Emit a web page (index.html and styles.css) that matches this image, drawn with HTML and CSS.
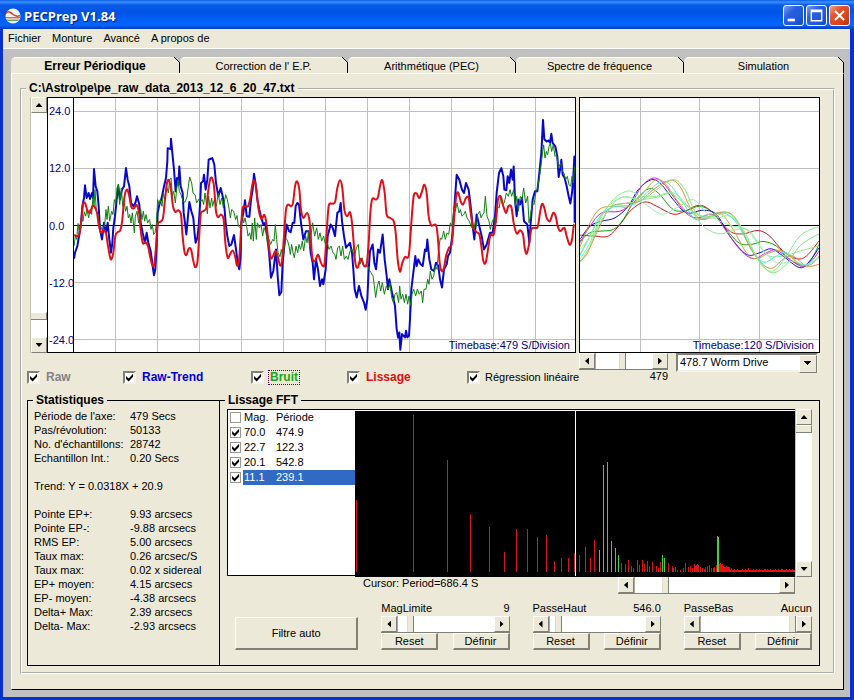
FILE: index.html
```html
<!DOCTYPE html>
<html lang="fr">
<head>
<meta charset="utf-8">
<title>PECPrep V1.84</title>
<link rel="stylesheet" href="styles.css">
</head>
<body>
<div class="window">
  <header class="titlebar">
    <svg class="app-icon" viewBox="0 0 16 16" width="16" height="16" aria-hidden="true">
      <circle cx="8" cy="8" r="7.5" fill="#f6f6ee"/>
      <path d="M1 5.500C4 2 6 5 8 6.500S12 9 15 7.500" fill="none" stroke="#c8402c" stroke-width="1.500"/>
      <path d="M1 9.500H15M2.500 12.500H13.500" stroke="#5fa45f" stroke-width="1"/>
      <path d="M1.500 11H14.500" stroke="#d88070" stroke-width="1"/>
    </svg>
    <h1>PECPrep V1.84</h1>
    <button class="win-btn" aria-label="Réduire"><svg viewBox="0 0 21 21"><path d="M4 14h8v3H4z" fill="#fff"/></svg></button>
    <button class="win-btn" aria-label="Agrandir"><svg viewBox="0 0 21 21"><path d="M4 4h13v13H4zM5.500 7v8.500h10V7z" fill="#fff" fill-rule="evenodd"/></svg></button>
    <button class="win-btn close" aria-label="Fermer"><svg viewBox="0 0 21 21"><path d="M5.500 5.500l10 10M15.500 5.500l-10 10" stroke="#fff" stroke-width="2.200"/></svg></button>
  </header>
  <nav class="menu">
    <a href="#">Fichier</a><a href="#">Monture</a><a href="#">Avancé</a><a href="#">A propos de</a>
  </nav>
  <main class="workspace">
    <div class="tabs" role="tablist">
      <button class="tab active" role="tab">Erreur Périodique</button>
      <button class="tab" role="tab">Correction de l' E.P.</button>
      <button class="tab" role="tab">Arithmétique (PEC)</button>
      <button class="tab" role="tab">Spectre de fréquence</button>
      <button class="tab" role="tab">Simulation</button>
    </div>
    <div class="panel">
      <fieldset class="file-group">
        <legend>C:\Astro\pe\pe_raw_data_2013_12_6_20_47.txt</legend>
        <div class="top">
          <div class="scroll vertical zoom-scroll">
            <button class="arrow up" aria-label="Haut"></button>
            <input type="range" value="92" aria-label="Échelle">
            <button class="arrow down" aria-label="Bas"></button>
          </div>
          <div class="chart">
            <div class="axis"><span>24.0</span><span>12.0</span><span>0.0</span><span>-12.0</span><span>-24.0</span></div>
            <div class="plot">
              <svg id="signal" viewBox="162 24 1503 765" preserveAspectRatio="none"></svg>
              <span class="timebase">Timebase:479 S/Division</span>
            </div>
          </div>
          <div class="chart">
            <div class="plot">
              <svg id="cycles" viewBox="30 24 718 765" preserveAspectRatio="none"></svg>
              <span class="timebase">Timebase:120 S/Division</span>
            </div>
          </div>
          <div class="traces">
            <label class="raw"><input type="checkbox" checked><b>Raw</b></label>
            <label class="trend"><input type="checkbox" checked><b>Raw-Trend</b></label>
            <label class="noise"><input type="checkbox" checked><b>Bruit</b></label>
            <label class="smooth"><input type="checkbox" checked><b>Lissage</b></label>
            <label><input type="checkbox" checked><span>Régression linéaire</span></label>
          </div>
          <div class="period">
            <div class="period-scroll">
              <div class="scroll">
                <button class="arrow left" aria-label="Gauche"></button>
                <input type="range" value="47" aria-label="Période">
                <button class="arrow right" aria-label="Droite"></button>
              </div>
              <output>479</output>
            </div>
            <div class="combo">
              <select aria-label="Axe"><option>478.7 Worm Drive</option></select>
            </div>
          </div>
        </div>
        <div class="bottom">
          <fieldset class="box stats">
            <legend>Statistiques</legend>
            <dl>
              <dt>Période de l'axe:</dt><dd>479 Secs</dd>
              <dt>Pas/révolution:</dt><dd>50133</dd>
              <dt>No. d'échantillons:</dt><dd>28742</dd>
              <dt>Echantillon Int.:</dt><dd>0.20 Secs</dd>
            </dl>
            <p>Trend: Y = 0.0318X + 20.9</p>
            <dl>
              <dt>Pointe EP+:</dt><dd>9.93 arcsecs</dd>
              <dt>Pointe EP-:</dt><dd>-9.88 arcsecs</dd>
              <dt>RMS EP:</dt><dd>5.00 arcsecs</dd>
              <dt>Taux max:</dt><dd>0.26 arcsec/S</dd>
              <dt>Taux max:</dt><dd>0.02 x sidereal</dd>
              <dt>EP+ moyen:</dt><dd>4.15 arcsecs</dd>
              <dt>EP- moyen:</dt><dd>-4.38 arcsecs</dd>
              <dt>Delta+ Max:</dt><dd>2.39 arcsecs</dd>
              <dt>Delta- Max:</dt><dd>-2.93 arcsecs</dd>
            </dl>
          </fieldset>
          <fieldset class="box fft">
            <legend>Lissage FFT</legend>
            <div class="fft-grid">
              <div class="list">
                <table>
                  <thead><tr><td><input type="checkbox" aria-label="Tout"></td><th>Mag.</th><th>Période</th></tr></thead>
                  <tbody>
                    <tr><td><input type="checkbox" checked aria-label="474.9"></td><td>70.0</td><td>474.9</td></tr>
                    <tr><td><input type="checkbox" checked aria-label="122.3"></td><td>22.7</td><td>122.3</td></tr>
                    <tr><td><input type="checkbox" checked aria-label="542.8"></td><td>20.1</td><td>542.8</td></tr>
                    <tr class="selected"><td><input type="checkbox" checked aria-label="239.1"></td><td>11.1</td><td>239.1</td></tr>
                  </tbody>
                </table>
              </div>
              <div class="spectrum"><svg id="spectrum" viewBox="355 411 440 167" preserveAspectRatio="none"></svg></div>
              <div class="scroll vertical">
                <button class="arrow up" aria-label="Haut"></button>
                <input type="range" value="0" aria-label="Amplitude">
                <button class="arrow down" aria-label="Bas"></button>
              </div>
              <div class="cursor-row">
                <span>Cursor: Period=686.4 S</span>
                <div class="scroll">
                  <button class="arrow left" aria-label="Gauche"></button>
                  <input type="range" value="20" aria-label="Position">
                  <button class="arrow right" aria-label="Droite"></button>
                </div>
              </div>
            </div>
            <div class="filters">
              <button class="btn auto">Filtre auto</button>
              <div class="filter">
                <div class="filter-head"><label for="mag">MagLimite</label><output>9</output></div>
                <div class="scroll">
                  <button class="arrow left" aria-label="Moins"></button>
                  <input type="range" id="mag" value="10">
                  <button class="arrow right" aria-label="Plus"></button>
                </div>
                <div class="filter-foot"><button class="btn">Reset</button><button class="btn">Définir</button></div>
              </div>
              <div class="filter">
                <div class="filter-head"><label for="high">PasseHaut</label><output>546.0</output></div>
                <div class="scroll">
                  <button class="arrow left" aria-label="Moins"></button>
                  <input type="range" id="high" value="6">
                  <button class="arrow right" aria-label="Plus"></button>
                </div>
                <div class="filter-foot"><button class="btn">Reset</button><button class="btn">Définir</button></div>
              </div>
              <div class="filter">
                <div class="filter-head"><label for="low">PasseBas</label><output>Aucun</output></div>
                <div class="scroll">
                  <button class="arrow left" aria-label="Moins"></button>
                  <input type="range" id="low" value="100">
                  <button class="arrow right" aria-label="Plus"></button>
                </div>
                <div class="filter-foot"><button class="btn">Reset</button><button class="btn">Définir</button></div>
              </div>
            </div>
          </fieldset>
        </div>
      </fieldset>
    </div>
  </main>
</div>
<script src="charts.js"></script>
</body>
</html>
```
FILE: styles.css
```css
* { box-sizing: border-box; }

body {
  margin: 0;
  background: #0a2fd0;
  color: #000;
  font: 11px/13px "Liberation Sans", Arial, sans-serif;
}

button, input, select { margin: 0; font: inherit; color: inherit; }
button { padding: 0; border: 0; }
fieldset { margin: 0; padding: 0; min-width: 0; border: 0; }
legend { font-weight: bold; font-size: 12px; padding: 0 3px; line-height: 13px; }
dl, dd, p { margin: 0; }

.window { min-height: 100vh; display: flex; flex-direction: column; border: solid #0a2fd0; border-width: 0 4px 4px 3px; }

/* title bar */
.titlebar {
  display: flex;
  align-items: center;
  gap: 2px;
  height: 29px;
  margin: 0 -4px 0 -3px;
  padding: 2px 4px 0 5px;
  background: linear-gradient(#0a5be6 0, #3b91ff 2px, #0a5ae8 5px, #0054e3 12px, #0361fb 21px, #0566ff 25px, #0347cf 28px, #0138b5);
}
.titlebar h1 {
  flex: 1;
  margin: 0 0 0 1px;
  color: #fff;
  font: bold 13px/16px "Open Sans", "Noto Sans", sans-serif;
  text-shadow: 1px 1px 1px #0a1883;
}
.win-btn {
  width: 21px;
  height: 21px;
  border: 1px solid #fff;
  border-radius: 3px;
  background: linear-gradient(135deg, #7ba2f0, #2b5fdf 35%, #2257dc 70%, #1a48b8);
}
.win-btn svg { display: block; width: 19px; height: 19px; }
.win-btn.close { background: linear-gradient(135deg, #f0a08a, #e0532c 35%, #d9431b 70%, #b03210); }

/* menu */
.menu { display: flex; gap: 11px; height: 20px; padding: 3px 5px; background: #ece9d8; border-bottom: 1px solid #fff; }
.menu a { color: inherit; text-decoration: none; }

/* tabs */
.workspace { flex: 1; display: flex; flex-direction: column; padding: 8px 6px 7px 8px; background: #c0c0c0; }
.tabs { display: grid; grid-template-columns: 169fr 168fr 168fr 168fr 160fr; }
.tab {
  position: relative;
  height: 16px;
  padding-top: 1px;
  background: #ece9d8;
  border-top: 1px solid #fff;
  border-right: 1px solid #000;
  border-top-left-radius: 5px;
}
.tab::after {
  content: "";
  position: absolute;
  top: -1px;
  right: -1px;
  width: 6px;
  height: 6px;
  background: linear-gradient(to top right, #ece9d8 42%, #000 44% 56%, #c0c0c0 58%);
}
.tab.active { font-weight: bold; font-size: 12px; }
.panel {
  flex: 1;
  padding: 8px;
  padding-bottom: 15px;
  background: #ece9d8;
  border: 1px solid;
  border-color: #fff #000 #000 #fff;
}

/* group boxes */
.file-group { padding: 2px 13px 6px 5px; border: 2px groove #fff; }
.file-group > legend { margin-left: -1px; }
.box { padding: 2px 7px 0; border: 1px solid #000; }

/* charts */
.top { display: grid; grid-template-columns: 20px minmax(0, 529fr) minmax(0, 244fr); grid-template-rows: 256px auto; }
.zoom-scroll { margin-left: 3px; }
.chart { display: flex; min-width: 0; background: #fff; border: 1px solid #000; }
.chart + .chart { margin-left: 3px; }
.axis {
  display: flex;
  flex-direction: column;
  justify-content: space-between;
  width: 26px;
  padding: 7px 0 5px 1px;
  border-right: 1px solid #000;
  color: #00007c;
  white-space: nowrap;
}
.plot { position: relative; flex: 1; min-width: 0; }
.plot svg { position: absolute; width: 100%; height: 100%; }
.timebase { position: absolute; right: 5px; bottom: 0; color: #00007c; }
.line { fill: none; vector-effect: non-scaling-stroke; }
.line.thin { stroke-width: 1px; }
.line.thick { stroke-width: 2px; stroke-linejoin: round; }
.grid { stroke: #c0c0c0; fill: none; stroke-width: 1px; vector-effect: non-scaling-stroke; shape-rendering: crispEdges; }
.zero { stroke: #000; }

/* trace switches */
.traces { grid-column: 1 / 3; display: grid; grid-template-columns: 96px 128px 96px 120px 1fr; padding: 18px 0 10px; line-height: 13px; }
.traces label { display: flex; align-items: center; gap: 5px; white-space: nowrap; }
.traces b { font-size: 12px; padding: 0 1px; }
.raw { color: #848284; }
.trend { color: #0000d8; }
.noise b { color: #18a818; outline: 1px dotted #600060; }
.smooth { color: #d81010; }

input[type="checkbox"] {
  appearance: none;
  flex: none;
  width: 13px;
  height: 13px;
  display: block;
  background: #fff;
  border: 2px solid;
  border-color: #808078 #f4f2e8 #f4f2e8 #808078;
}
input[type="checkbox"]:checked::before {
  content: "";
  display: block;
  width: 9px;
  height: 9px;
  background: #000;
  clip-path: polygon(12% 34%, 40% 60%, 90% 8%, 90% 42%, 40% 94%, 12% 66%);
}

/* period selector */
.period { display: flex; gap: 8px; margin-left: 3px; }
.period-scroll { width: 89px; }
.period-scroll output { display: block; text-align: right; }
.combo { position: relative; flex: 1; height: 19px; margin-right: 2px; }
.combo select {
  appearance: none;
  width: 100%;
  height: 19px;
  padding: 0 18px 0 2px;
  border: 2px solid;
  border-color: #808078 #f4f2e8 #f4f2e8 #808078;
  border-radius: 0;
  background: #fff;
}
.combo::after {
  content: "";
  position: absolute;
  top: 2px;
  right: 1px;
  width: 16px;
  height: 16px;
  border: 1px solid;
  border-color: #fff #808078 #808078 #fff;
  background: linear-gradient(#000, #000) 4px 5px / 7px 1px no-repeat, linear-gradient(#000, #000) 5px 6px / 5px 1px no-repeat, linear-gradient(#000, #000) 6px 7px / 3px 1px no-repeat, linear-gradient(#000, #000) 7px 8px / 1px 1px no-repeat, #ece9d8;
  pointer-events: none;
}

/* scroll bars */
.scroll { display: flex; height: 17px; background: #fff; border-bottom: 1px solid #808078; }
.scroll.vertical { flex-direction: column; width: 17px; height: auto; border-bottom: 0; border-left: 1px solid #c4c0b0; }
.arrow {
  flex: none;
  display: grid;
  place-items: center;
  width: 16px;
  height: 16px;
  background: #ece9d8;
  border: 1px solid;
  border-color: #fff #808078 #808078 #fff;
}
.arrow::before { content: ""; width: 7px; height: 4px; background: #000; }
.arrow.up::before { clip-path: polygon(50% 0, 100% 100%, 0 100%); }
.arrow.down::before { clip-path: polygon(0 0, 100% 0, 50% 100%); }
.arrow.left::before, .arrow.right::before { width: 4px; height: 7px; }
.arrow.left::before { clip-path: polygon(100% 0, 100% 100%, 0 50%); }
.arrow.right::before { clip-path: polygon(0 0, 100% 50%, 0 100%); }
.scroll input { appearance: none; flex: 1; min-width: 0; width: 100%; height: 16px; background: #fff; border-left: 1px solid #aca899; }
.scroll.vertical input { writing-mode: vertical-lr; width: 16px; height: auto; min-height: 0; border-left: 0; }
.scroll input::-webkit-slider-thumb {
  appearance: none;
  width: 7px;
  height: 16px;
  background: #ece9d8;
  border: solid;
  border-width: 0 1px 0 1px;
  border-color: #fff #808078 #808078 #e0dccc;
}
.scroll.vertical input::-webkit-slider-thumb { width: 16px; height: 8px; border-width: 1px 1px 1px 0; }

/* statistics */
.bottom { display: grid; grid-template-columns: 192px minmax(0, 1fr); }
.box.stats { padding: 2px 0 20px 6px; border-right: 0; }
.stats legend { margin-left: -1px; }
.stats dl { display: grid; grid-template-columns: 96px 1fr; line-height: 14px; white-space: nowrap; }
.stats p { line-height: 14px; margin: 14px 0; }
.fft > legend { margin-left: -2px; }

/* smoothing */
.fft-grid { display: grid; grid-template-columns: 128px minmax(0, 1fr) 17px; grid-template-rows: 168px 17px; }
.list { height: 167px; background: #fff; border: solid #000; border-width: 1px 0 1px 1px; }
.list table { width: 100%; border-collapse: collapse; table-layout: fixed; }
.list tr { height: 15px; }
.list td, .list th { padding: 0 0 0 1px; height: 15px; line-height: 15px; font-weight: normal; text-align: left; }
.list tr > :first-child { width: 15px; padding: 0 0 0 2px; }
.list tr > :nth-child(2) { width: 32px; }
.list input[type="checkbox"] { width: 11px; height: 11px; border: 1px solid #9c988c; }
.selected td:not(:first-child) { background: #316ac5; color: #fff; }
.spectrum { background: #000; border-top: 1px solid #000; box-shadow: inset 0 1px #fff; }
.spectrum svg { display: block; width: 100%; height: 167px; shape-rendering: crispEdges; }
.bar { stroke-width: 1px; vector-effect: non-scaling-stroke; }
.cursor-row { grid-column: 2; display: flex; justify-content: space-between; padding-left: 8px; }
.cursor-row .scroll { width: 41%; }

.filters { display: flex; align-items: flex-end; gap: 23px; padding: 8px 0 15px 8px; }
.btn { height: 17px; width: 57px; line-height: 14px; background: #ece9d8; border: solid; border-width: 1px 2px 2px 1px; border-color: #fff #808078 #808078 #fff; }
.btn.auto { flex: 121; height: 33px; }
.filter { flex: 129; }
.filter-head, .filter-foot { display: flex; justify-content: space-between; }
.filter-head { height: 14px; }
```
FILE: charts.js
```js
const NS = "http://www.w3.org/2000/svg";
const add = (svg, d, cls, stroke) => {
  const p = document.createElementNS(NS, "path");
  p.setAttribute("d", d);
  p.setAttribute("class", cls);
  if (stroke) p.setAttribute("stroke", stroke);
  svg.append(p);
};
const parse = s => s.trim().split(/\s+/).map(t => t.split(",").map(Number));
const straight = pts => "M" + pts.map(p => p.join(" ")).join("L");
const curve = pts => {
  let d = "M" + pts[0].join(" ");
  for (let i = 0; i < pts.length - 1; i++) {
    const a = pts[i - 1] || pts[i], b = pts[i], c = pts[i + 1], e = pts[i + 2] || c;
    d += "C" + [b[0] + (c[0] - a[0]) / 6, b[1] + (c[1] - a[1]) / 6,
      c[0] - (e[0] - b[0]) / 6, c[1] - (e[1] - b[1]) / 6, c[0], c[1]].join(" ");
  }
  return d;
};
const join = (a, b) => parse(a).concat(parse(b).map(([x, y]) => [x + 810, y]));

/* long recording */
const blue = join(
  `162,508 165,490 172,470 177,440 183,400 187,350 192,325 195,287 200,325 206,310 210,328 216,310 219,325 222,238 227,290 232,305 236,350 240,420 246,450 252,400 258,430 263,400 268,450 273,490 277,460 280,415 285,380 290,330 295,290 300,330 306,300 312,290 318,235 323,270 328,290 333,340 340,350 346,340 351,320 358,345 362,400 368,430 375,460 380,430 385,460 392,485 398,530 402,558 406,540 410,470 413,370 418,345 425,325 432,290 438,265 442,215 443,175 452,178 453,147 458,200 462,240 467,305 471,265 475,285 478,230 482,290 488,310 491,370 495,400 499,435 504,380 508,337 514,365 520,385 524,435 527,460 532,445 536,410 541,330 543,280 549,275 552,255 557,300 562,270 566,210 572,207 577,205 583,225 588,280 595,320 602,295 608,320 613,350 617,400 622,440 628,470 634,465 642,437 648,480 654,525 658,540 662,500 664,400 670,370 675,332 680,380 688,382 693,330 698,300 702,252 708,290 712,330 718,360 724,385 730,405 735,400 742,440 748,500 753,565 760,545 768,480 773,560 778,618 784,608 788,520 793,470 800,405`,
  `-3,425 2,428 8,400 13,400 17,350 22,340 27,345 33,400 40,450 48,425 56,425 62,490 68,520 72,570 78,510 84,540 90,590 96,570 100,585 107,540 113,440 122,405 128,415 135,440 142,370 148,365 152,340 156,395 162,440 168,475 180,460 186,490 190,540 194,600 200,625 207,590 214,620 222,640 227,662 232,630 236,540 240,485 248,465 253,520 258,540 264,480 270,490 278,435 284,510 290,560 294,600 298,570 306,610 315,650 320,720 324,745 328,730 331,782 336,735 345,745 348,725 352,745 357,740 360,690 364,600 370,550 376,500 380,530 385,510 392,525 398,530 405,480 409,485 412,450 418,510 424,540 432,545 438,520 445,530 450,570 456,595 462,540 470,525 474,500 480,490 488,430 494,340 500,255 508,270 516,300 522,310 528,280 536,300 542,350 548,410 553,450 560,375 568,410 575,440 582,480 590,465 600,430 608,430 615,380 620,310 627,250 634,235 640,260 643,300 649,302 653,260 658,280 663,240 668,270 671,230 675,330 680,380 685,330 690,345 696,325 702,395 712,405 718,460 722,400 728,330 735,305 742,305 748,250 754,190 759,90 763,148 770,155 775,152 780,158 784,132 788,160 796,170 802,200 806,262 812,230 814,210 818,255 824,265 830,290 836,320 841,342 846,310 850,260 853,200 854,400`);
const red = join(
  `162,436 170,440 178,435 184,395 189,345 195,340 202,362 210,370 217,350 224,352 231,370 236,405 243,430 251,422 258,432 264,470 270,503 274,510 280,490 286,440 293,428 301,422 307,390 313,325 320,300 327,315 334,352 342,356 350,346 357,370 363,430 369,462 376,458 384,470 390,500 397,528 403,525 408,470 413,405 421,397 429,385 435,330 441,280 447,272 453,300 459,350 466,367 475,362 483,375 487,430 493,485 499,497 506,478 513,480 519,510 525,533 532,520 537,450 542,375 550,365 559,355 564,310 570,270 576,265 582,290 588,365 594,383 603,375 611,390 616,460 623,505 630,495 638,483 645,500 651,528 657,515 662,440 667,360 675,350 684,350 691,325 697,285 703,272 709,300 716,360 724,388 733,376 739,400 745,455 752,505 759,500 766,485 773,500 780,528 786,515 792,440 798,360 805,345 `,
  `3,350 9,340 15,290 21,275 28,300 33,360 40,385 51,370 58,390 62,440 67,505 75,515 84,495 91,515 98,530 104,520 110,430 116,350 125,342 135,338 142,295 150,272 157,295 163,360 171,380 180,368 186,400 191,460 196,520 203,535 212,508 221,528 230,525 236,460 241,370 247,328 258,330 264,322 271,285 277,272 284,310 290,375 300,385 311,395 317,430 323,510 330,547 337,520 345,503 356,500 362,430 367,360 372,315 380,312 388,325 396,305 403,285 410,310 416,380 424,408 438,407 444,450 449,520 455,545 462,535 468,500 477,475 485,465 491,400 498,325 504,308 512,335 519,345 528,325 536,325 542,370 550,415 560,428 568,435 574,470 580,515 587,520 594,480 601,438 611,435 618,390 624,330 632,320 640,350 648,370 655,350 664,352 671,400 680,432 690,422 699,435 704,475 710,493 717,465 724,420 734,415 743,412 750,370 756,343 763,355 770,385 780,395 789,370 797,380 803,410 811,425 823,415 830,440 839,466 846,450 851,410 854,405`);
const green = join(
  `162,470 166,440 170,450 174,402 178,430 184,385 189,395 193,367 197,380 201,360 206,385 210,360 215,375 219,320 222,350 225,300 229,365 233,370 237,395 242,410 248,425 254,405 258,360 261,390 265,350 269,395 275,365 279,375 283,330 287,345 291,295 295,283 299,345 304,295 308,350 313,340 317,365 321,350 325,385 329,375 333,400 337,370 343,430 346,380 351,365 356,400 362,360 366,390 370,365 374,395 378,375 383,400 389,390 393,420 397,405 401,435 405,430 409,405 413,330 417,345 421,330 426,350 430,310 434,330 440,290 445,310 449,270 453,265 457,320 461,305 466,340 470,300 474,270 478,305 483,315 489,335 495,338 501,322 505,290 509,262 515,280 519,310 525,315 530,340 537,328 542,335 547,330 551,345 555,310 559,340 562,373 566,320 570,355 575,325 578,350 583,330 589,350 595,310 600,345 605,325 610,355 617,315 622,330 626,350 631,385 635,360 641,365 647,390 651,378 655,410 661,415 667,380 671,400 675,385 680,410 684,440 689,430 693,450 697,400 700,455 704,385 709,450 712,400 718,415 723,405 728,440 732,415 738,430 742,460 747,450 752,465 758,450 762,455 766,405 770,450 774,490 780,502 784,480 788,500 793,475 797,445`,
  `-7,455 -3,470 1,495 5,465 9,490 13,505 18,470 23,490 27,465 32,480 37,455 41,485 47,440 51,460 56,425 59,475 64,430 68,400 74,440 80,415 85,450 90,430 95,455 101,440 106,465 112,460 117,480 123,470 129,490 134,495 138,510 143,475 148,470 153,500 158,470 163,510 169,500 174,510 180,485 187,480 193,505 199,475 205,465 210,525 216,505 222,530 230,525 237,540 243,550 249,560 253,590 257,625 262,590 267,575 272,605 277,580 283,615 289,590 295,600 300,580 305,625 310,640 315,615 320,610 326,640 329,590 333,630 338,615 343,640 348,615 353,645 357,620 363,650 366,615 371,600 377,620 382,600 388,615 394,605 398,640 402,600 408,600 413,570 417,585 421,545 426,570 431,560 436,530 441,540 446,480 451,445 455,450 461,425 466,450 471,430 476,435 481,400 486,410 492,350 496,365 501,340 507,370 511,360 516,380 521,375 526,365 531,385 538,395 545,415 552,420 556,395 560,410 563,375 569,365 573,385 578,375 582,370 586,320 591,380 597,395 601,420 607,395 613,385 618,400 622,350 628,355 632,320 637,345 643,340 649,310 655,320 660,300 665,320 671,300 676,350 680,320 685,365 691,320 696,330 701,295 707,340 713,320 717,400 722,375 727,340 732,345 738,305 743,295 748,265 754,220 758,185 761,165 765,205 769,185 773,195 777,170 781,160 785,185 790,165 795,200 800,195 805,235 812,220 817,245 822,250 827,270 832,260 837,285 842,290 846,260 850,280 854,230`);

const signal = document.getElementById("signal");
for (let x = 287; x < 1665; x += 126) add(signal, `M${x} 24V789`, "grid");
add(signal, "M162 64.500H1665M162 235.500H1665M162 580.500H1665M162 751.500H1665", "grid");
add(signal, "M162 406.500H1665", "grid zero");
add(signal, straight(blue), "line thick", "#0808c8");
add(signal, straight(green), "line thin", "#108010");
add(signal, curve(red), "line thick", "#e01018");

/* superposed cycles */
const cycles = document.getElementById("cycles");
add(cycles, "M211.500 24V789M388.500 24V789M568.500 24V789M30 64.500H748M30 235.500H748M30 580.500H748M30 751.500H748", "grid");
add(cycles, "M30 406.500H748", "grid zero");
[
  ["#d01818", "30,437 75,440 115,440 150,405 185,360 225,337 260,350 310,374 345,365 390,347 430,370 480,425 520,433 565,423 600,440 640,485 680,508 710,500 748,455"],
  ["#10a010", "30,455 60,430 90,425 130,420 160,390 190,340 235,298 265,310 310,360 350,362 390,350 430,370 470,420 510,462 550,464 580,456 620,470 660,510 700,528 725,510 748,465"],
  ["#1010c8", "30,450 60,410 95,395 135,385 175,350 205,300 245,270 275,285 310,330 350,370 400,362 440,375 480,440 530,495 570,490 605,478 640,500 690,535 720,515 748,475"],
  ["#d020d0", "30,460 60,410 95,370 150,365 185,340 215,290 250,265 280,280 310,320 350,372 385,385 430,375 470,425 510,480 550,508 590,490 620,482 660,510 700,532 730,510 748,485"],
  ["#c8a040", "30,472 60,400 90,358 130,350 180,350 220,310 255,272 285,280 320,330 370,385 410,385 450,370 490,420 530,490 560,508 600,490 640,485 690,525 725,525 748,500"],
  ["#40e8f0", "30,498 60,440 90,380 130,352 190,345 230,310 270,278 300,285 340,340 375,388 410,385 460,370 500,400 540,470 580,518 620,500 650,490 700,528 748,505"],
  ["#e08838", "30,515 50,495 80,430 120,355 160,342 210,335 250,300 300,272 330,290 365,360 400,390 460,367 500,390 550,490 600,537 640,510 670,500 710,530 748,525"],
  ["#78e878", "30,520 60,470 90,400 130,350 180,340 220,330 260,300 310,270 345,300 380,370 430,380 475,370 510,410 560,500 605,550 650,525 690,470 740,437 748,437"],
  ["#88f088", "30,510 60,460 90,390 130,330 175,304 215,320 260,320 300,310 340,340 390,380 440,385 480,380 520,420 570,520 610,545 650,500 690,440 735,415 748,415"],
  ["#90e890", "30,495 70,420 110,355 160,322 210,330 260,323 310,310 350,345 400,410 450,433 500,420 540,425 590,495 640,500 690,485 748,470"],
  ["#98f0b0", "30,480 70,430 110,370 150,325 200,330 235,350 275,374 320,355 370,330 410,370 450,395 490,410 530,420 570,470 620,520 670,515 710,525 748,505"]
].forEach(([c, pts]) => add(cycles, curve(parse(pts)), "line thin", c));

/* FFT magnitudes: x, top of bar */
const spectrum = document.getElementById("spectrum");
const bars = s => parse(s).map(([x, y]) => `M${x + 0.5} ${y}V573`).join("");
add(spectrum, bars(`356,501 413,416 447,461 470,515 489,528 504,553 516,530 527,530 537,538 546,536 554,562 561,559 568,559 574,554 579,556 585,548 590,559 594,541
  621,564 625,565 628,561 631,567 633,569 637,561 639,566 642,561 644,565 647,562 649,567 652,563 656,567 658,569 660,563 668,564 672,567 673,569 675,568 677,571 680,571 683,569 685,564 688,568 690,567 692,569 694,565 695,567 696,566 697,565 698,566 700,568 702,569 704,570 705,568 707,567 709,566 711,569 713,569 714,568 716,566`), "bar", "#d81818");
let tail = "";
for (let x = 719; x < 795; x++) {
  const y = 571 - (x < 723 ? 6 : x < 730 ? 3 : 0) - (x * 7 % 11 < 3 ? 1 : 0) - (x * 5 % 17 === 0 ? 1 : 0);
  tail += `M${x + 0.5} ${y}V573`;
}
add(spectrum, tail, "bar", "#e81010");
add(spectrum, bars("599,551 603,466 607,463 611,542 615,549 618,556 662,556 664,559 717,537 718,538"), "bar", "#40d040");
add(spectrum, "M575.500 412V577", "bar", "#fff");
```
